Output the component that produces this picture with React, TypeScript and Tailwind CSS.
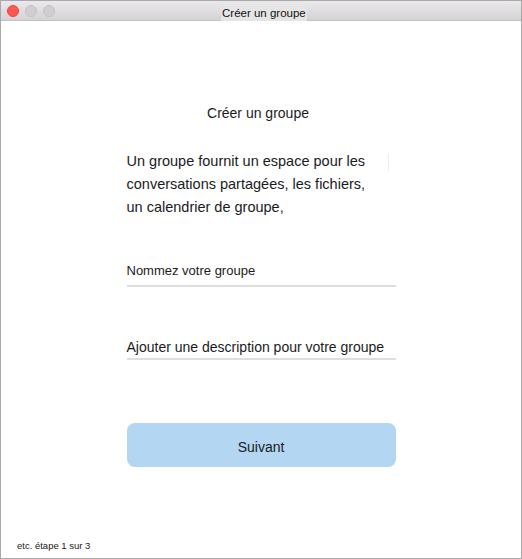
export default function App() {
  return (
    <div
      className="w-[522px] h-[559px] bg-white border border-[#a9a9a9] flex flex-col text-[#1b1b1b]"
      style={{ fontFamily: '"Liberation Sans", Arial, sans-serif' }}
    >
      {/* Title bar */}
      <div className="relative h-[20px] shrink-0 bg-gradient-to-b from-[#ebe9eb] to-[#d4d2d4] border-b border-[#c2c2c2] flex items-center">
        <div className="flex items-center gap-[6px] pl-[6px]">
          <span className="w-[12px] h-[12px] rounded-full bg-[#fc5753] border border-[#e9463f]" />
          <span className="w-[12px] h-[12px] rounded-full bg-[#d0ced0] border border-[#c3c1c3]" />
          <span className="w-[12px] h-[12px] rounded-full bg-[#d0ced0] border border-[#c3c1c3]" />
        </div>
        <div className="absolute left-[220px] top-[4px] h-[16px] px-[1px] bg-[#e6e5e6] text-[11.5px] leading-[16px] text-[#111]">
          Créer un groupe
        </div>
      </div>

      {/* Body */}
      <div className="flex-1 flex flex-col items-center pt-[82px]">
        <div className="w-[269px] flex flex-col">
          <h1 className="text-center text-[14px] leading-[20px] font-normal pr-[6px]">Créer un groupe</h1>

          <div className="relative mt-[27px]">
            <p className="text-[14.5px] leading-[23px]">
              Un groupe fournit un espace pour les
              <br />
              conversations partagées, les fichiers,
              <br />
              un calendrier de groupe,
            </p>
            <span className="absolute left-[261px] top-[4px] w-px h-[17px] bg-[#e3f0fb]" />
          </div>

          <div className="mt-[43px] pb-[5px] border-b-2 border-[#dedede] text-[13px] leading-[18px]">
            Nommez votre groupe
          </div>

          <div className="mt-[51px] pb-[2px] border-b-2 border-[#dedede] text-[14px] leading-[18px]">
            Ajouter une description pour votre groupe
          </div>

          <button className="mt-[63px] h-[44px] w-full rounded-lg bg-[#b3d6f2] pt-[5px] text-[14px] text-[#1b1b1b]">
            Suivant
          </button>
        </div>

        <div className="flex-1" />

        <div className="self-start pl-[16px] pb-[6px] text-[9.5px] leading-[12px]">etc. étape 1 sur 3</div>
      </div>
    </div>
  )
}
